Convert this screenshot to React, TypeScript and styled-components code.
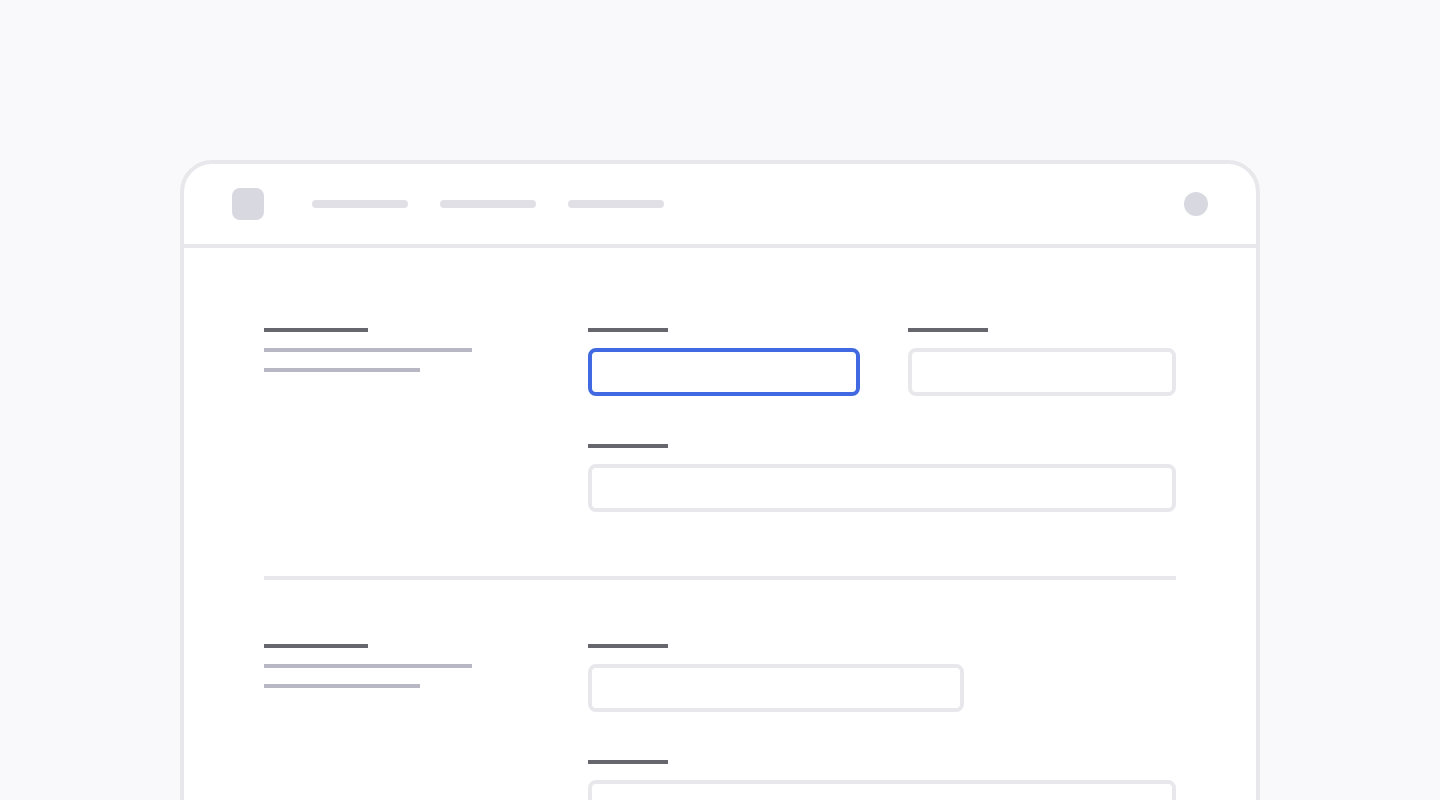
import React from "react";
import styled, { createGlobalStyle } from "styled-components";

const Global = createGlobalStyle`
  html, body { margin: 0; padding: 0; height: 100%; overflow: hidden; background: #f9f9fb; }
`;

const Page = styled.div`
  height: 800px;
  overflow: hidden;
  padding-top: 160px;
  box-sizing: border-box;
  background: #f9f9fb;
`;

const Frame = styled.div`
  width: 1080px;
  margin: 0 auto;
  box-sizing: border-box;
  background: #ffffff;
  border: 4px solid #e8e8ec;
  border-radius: 32px 32px 0 0;
`;

const Header = styled.header`
  display: flex;
  align-items: center;
  height: 84px;
  box-sizing: border-box;
  padding: 0 48px;
  border-bottom: 4px solid #e8e8ec;
`;

const Logo = styled.div`
  width: 32px;
  height: 32px;
  border-radius: 8px;
  background: #d8d8e0;
`;

const Nav = styled.nav`
  display: flex;
  gap: 32px;
  margin-left: 48px;
`;

const NavItem = styled.div`
  width: 96px;
  height: 8px;
  border-radius: 4px;
  background: #e0e0e6;
`;

const Avatar = styled.div`
  width: 24px;
  height: 24px;
  margin-left: auto;
  border-radius: 50%;
  background: #d8d8e0;
`;

const Content = styled.main`
  padding: 80px 80px 0;
`;

const Section = styled.section`
  display: grid;
  grid-template-columns: 276px 588px;
  column-gap: 48px;
`;

const Intro = styled.div`
  display: flex;
  flex-direction: column;
  gap: 16px;
`;

const Bar = styled.div<{ $w: number; $tone: "dark" | "mid" }>`
  width: ${(p) => p.$w}px;
  height: 4px;
  background: ${(p) => (p.$tone === "dark" ? "#66666f" : "#b8b8c4")};
`;

const Fields = styled.div`
  display: flex;
  flex-wrap: wrap;
  gap: 48px;
`;

const Field = styled.div<{ $w: number }>`
  display: flex;
  flex-direction: column;
  gap: 16px;
  width: ${(p) => p.$w}px;
`;

const Input = styled.div<{ $focus?: boolean }>`
  height: 48px;
  box-sizing: border-box;
  background: #ffffff;
  border: 4px solid ${(p) => (p.$focus ? "#4169e1" : "#e8e8ec")};
  border-radius: 8px;
`;

const Divider = styled.hr`
  height: 4px;
  margin: 64px 0;
  border: 0;
  background: #e8e8ec;
`;

const FormField = ({ w, focus }: { w: number; focus?: boolean }) => (
  <Field $w={w}>
    <Bar $w={80} $tone="dark" />
    <Input $focus={focus} />
  </Field>
);

const SectionIntro = () => (
  <Intro>
    <Bar $w={104} $tone="dark" />
    <Bar $w={208} $tone="mid" />
    <Bar $w={156} $tone="mid" />
  </Intro>
);

export default function App() {
  return (
    <Page>
      <Global />
      <Frame>
        <Header>
          <Logo />
          <Nav>
            <NavItem />
            <NavItem />
            <NavItem />
          </Nav>
          <Avatar />
        </Header>
        <Content>
          <Section>
            <SectionIntro />
            <Fields>
              <FormField w={272} focus />
              <FormField w={268} />
              <FormField w={588} />
            </Fields>
          </Section>
          <Divider />
          <Section>
            <SectionIntro />
            <Fields>
              <FormField w={376} />
              <FormField w={588} />
            </Fields>
          </Section>
        </Content>
      </Frame>
    </Page>
  );
}
